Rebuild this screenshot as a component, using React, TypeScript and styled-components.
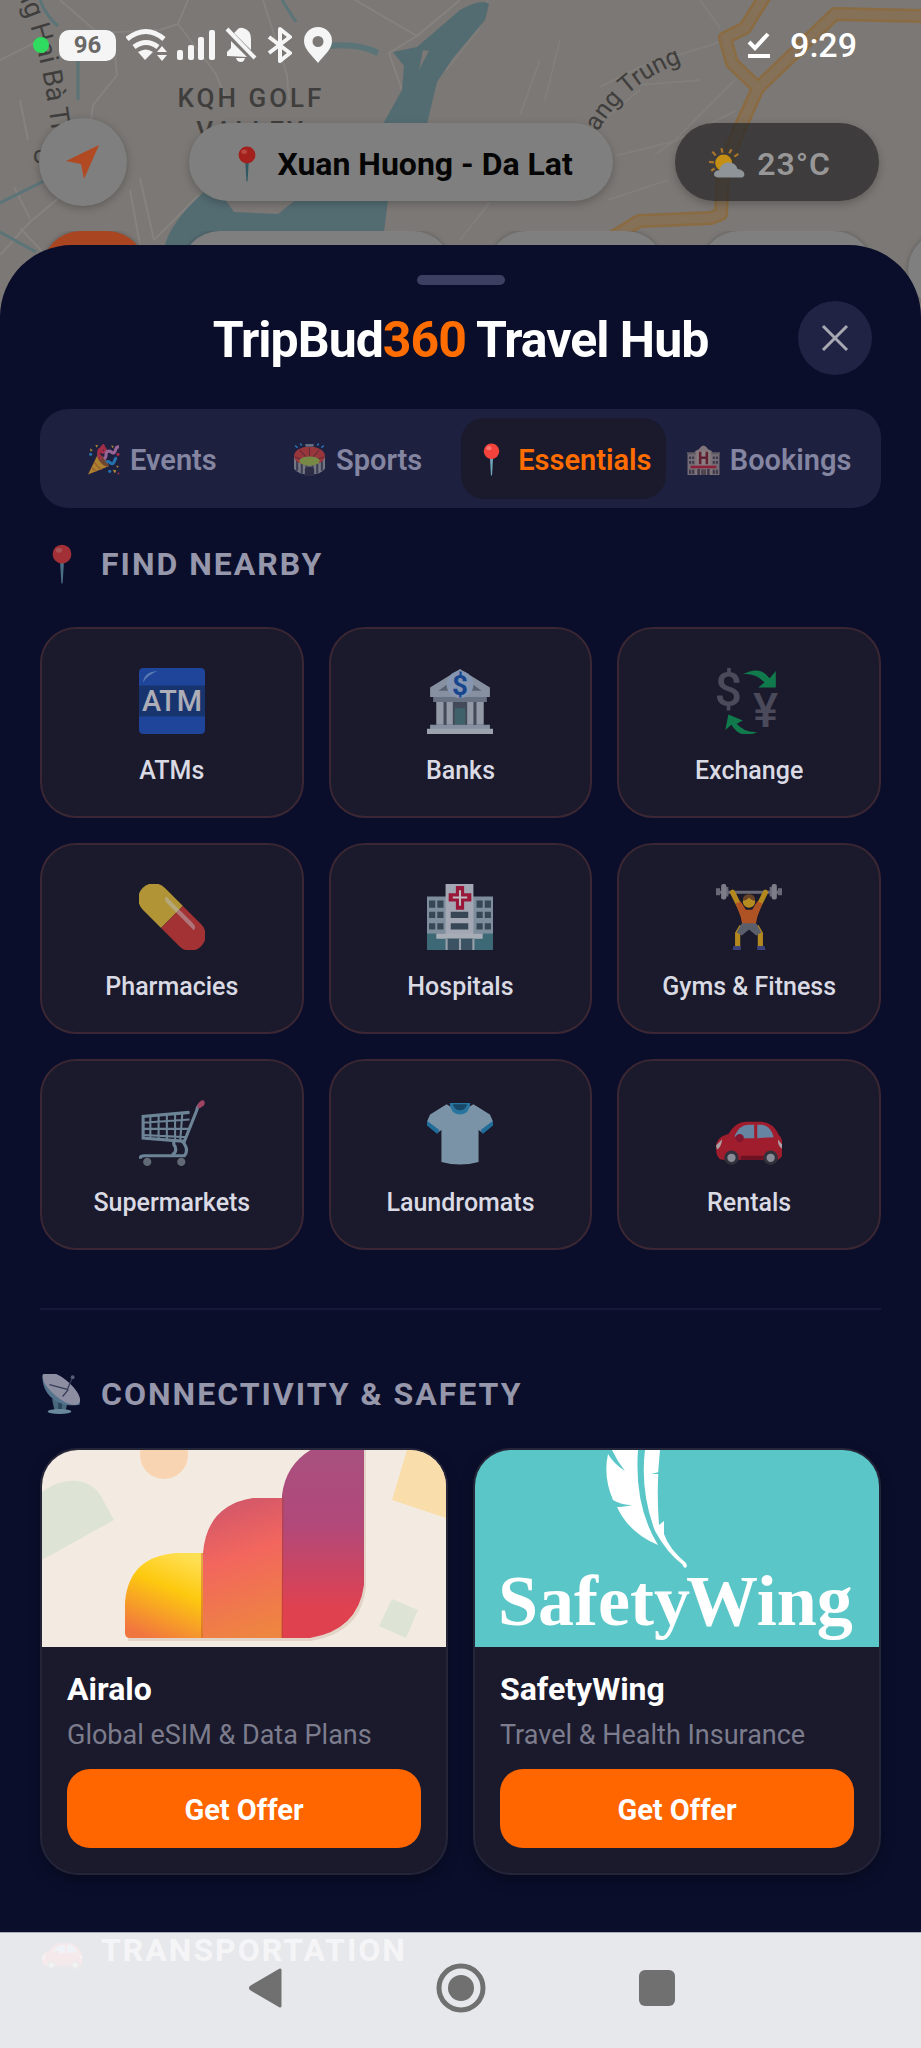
import React, { FC, ReactNode, useState } from 'react';
import styled, { createGlobalStyle } from 'styled-components';

const GlobalStyle = createGlobalStyle`
    * {
        box-sizing: border-box;
    }

    body {
        margin: 0;
        background: #0b0e2b;
        font-family: Roboto, 'Liberation Sans', sans-serif;
    }

    button {
        font-family: inherit;
        padding: 0;
        border: none;
        cursor: pointer;
    }
`;

const Screen = styled.div`
    position: relative;
    display: flex;
    flex-direction: column;
    height: 100vh;
    overflow: hidden;
    background: #7b7875;
`;

const MapLayer = styled.svg`
    position: absolute;
    top: 0;
    left: 0;
    width: 100%;
    height: 330px;
`;

const StatusBar = styled.div`
    position: relative;
    display: flex;
    flex-direction: row;
    justify-content: space-between;
    align-items: center;
    height: 90px;
    padding: 0 64px 0 33px;
`;

const StatusGroup = styled.div`
    display: flex;
    flex-direction: row;
    align-items: center;
    gap: 10px;

    & > svg {
        display: block;
    }
`;

const LiveDot = styled.span`
    width: 16px;
    height: 16px;
    border-radius: 50%;
    background: #2fdc5f;
`;

const Battery = styled.span`
    width: 57px;
    height: 31px;
    border-radius: 10px;
    background: #f5f5f5;
    color: #6b6967;
    font-size: 24px;
    font-weight: 700;
    line-height: 31px;
    text-align: center;
`;

const Clock = styled.span`
    margin-left: 9px;
    font-size: 34px;
    font-weight: 500;
    line-height: 40px;
    color: #ffffff;
`;

const TopRow = styled.div`
    position: relative;
    display: flex;
    flex-direction: row;
    justify-content: space-between;
    align-items: center;
    margin-top: 28px;
    padding: 0 42px 0 39px;
`;

const LocateButton = styled.button`
    display: flex;
    justify-content: center;
    align-items: center;
    width: 88px;
    height: 88px;
    border-radius: 50%;
    background: #7f7f7f;
    box-shadow: 0 2px 8px rgba(0, 0, 0, 0.25);
`;

const Pill = styled.button<{ $dark?: boolean }>`
    display: flex;
    flex-direction: row;
    align-items: center;
    gap: 12px;
    height: 78px;
    padding: 3px ${(props) => (props.$dark ? 48 : 40)}px 0 ${(props) => (props.$dark ? 34 : 40)}px;
    border-radius: 39px;
    background: ${(props) => (props.$dark ? 'rgba(45, 44, 43, 0.78)' : '#7f7f7f')};
    box-shadow: 0 3px 8px rgba(0, 0, 0, 0.22);
    font-size: 32px;
    font-weight: ${(props) => (props.$dark ? 600 : 700)};
    letter-spacing: ${(props) => (props.$dark ? '1px' : 'normal')};
    color: ${(props) => (props.$dark ? '#979797' : '#050505')};
`;

const ChipRow = styled.div`
    position: relative;
    display: flex;
    flex-direction: row;
    gap: 35px;
    margin: 25px 0 -64px 42px;
    overflow: hidden;
`;

const Chip = styled.span<{ $width: number; $active?: boolean }>`
    flex: none;
    width: ${(props) => props.$width}px;
    height: 78px;
    border-radius: 39px;
    background: ${(props) => (props.$active ? '#a94520' : '#7f7f7f')};
    box-shadow: 0 0 5px rgba(0, 0, 0, 0.25);
`;

const Sheet = styled.main`
    position: relative;
    display: flex;
    flex-direction: column;
    flex: 1;
    min-height: 0;
    padding: 30px 40px 0;
    overflow: hidden;
    border-radius: 72px 72px 0 0;
    background: #0a0e2b;
`;

const Handle = styled.span`
    flex: none;
    align-self: center;
    width: 88px;
    height: 10px;
    border-radius: 5px;
    background: #3c3f62;
`;

const SheetHeader = styled.header`
    display: grid;
    grid-template-columns: 1fr auto 1fr;
    align-items: start;
    margin-top: 16px;
    padding: 0 9px;
`;

const Title = styled.h1`
    grid-column: 2;
    margin: 0;
    font-size: 50px;
    font-weight: 700;
    line-height: 78px;
    letter-spacing: -1px;
    color: #ffffff;
`;

const Accent = styled.span`
    color: #ff6d00;
`;

const CloseButton = styled.button`
    display: flex;
    justify-content: center;
    align-items: center;
    justify-self: end;
    width: 74px;
    height: 74px;
    border-radius: 50%;
    background: #202343;
`;

const TabBar = styled.div`
    display: flex;
    flex-direction: row;
    margin-top: 30px;
    padding: 9px;
    border-radius: 28px;
    background: #1e2040;
`;

const Tab = styled.button<{ $active: boolean }>`
    display: flex;
    flex: 1;
    flex-direction: row;
    justify-content: center;
    align-items: center;
    gap: 10px;
    height: 81px;
    padding-top: 2px;
    border-radius: 23px;
    background: ${(props) => (props.$active ? '#1a1a2c' : 'transparent')};
    font-size: 29px;
    font-weight: 600;
    color: ${(props) => (props.$active ? '#ff6d00' : '#8485a0')};
    white-space: nowrap;

    & > svg {
        opacity: ${(props) => (props.$active ? 1 : 0.65)};
    }
`;

const SectionTitle = styled.h2<{ $top: number; $bottom: number }>`
    display: flex;
    flex-direction: row;
    align-items: center;
    gap: 19px;
    margin: ${(props) => props.$top}px 0 ${(props) => props.$bottom}px;
    padding-left: 2px;
    font-size: 32px;
    font-weight: 700;
    line-height: 40px;
    letter-spacing: 2px;
    color: #9697ab;

    & > svg {
        opacity: 0.65;
    }
`;

const PlaceGrid = styled.div`
    display: grid;
    grid-template-columns: repeat(3, 1fr);
    gap: 25px;
`;

const PlaceButton = styled.button`
    display: flex;
    flex-direction: column;
    align-items: center;
    gap: 21px;
    padding: 39px 0 29px;
    border: 2px solid #3a2733;
    border-radius: 36px;
    background: #1a1a2c;
    font-size: 25px;
    font-weight: 500;
    line-height: 32px;
    color: #dadae4;

    & > svg {
        opacity: 0.7;
    }
`;

const Divider = styled.hr`
    width: 100%;
    height: 2px;
    margin: 58px 0 0;
    border: none;
    background: #16193a;
`;

const OfferGrid = styled.div`
    display: grid;
    grid-template-columns: repeat(2, 1fr);
    gap: 25px;
`;

const OfferCard = styled.article`
    overflow: hidden;
    border: 2px solid #25253a;
    border-radius: 38px;
    background: #1a1a2c;
    box-shadow: 0 6px 14px rgba(0, 0, 0, 0.28);
`;

const Cover = styled.svg`
    display: block;
    width: 100%;
    height: 197px;
`;

const OfferBody = styled.div`
    display: flex;
    flex-direction: column;
    padding: 22px 25px 25px;
`;

const OfferName = styled.h3`
    margin: 0;
    font-size: 32px;
    font-weight: 700;
    line-height: 40px;
    color: #ffffff;
`;

const OfferText = styled.p`
    margin: 9px 0 17px;
    font-size: 27px;
    line-height: 34px;
    color: #7c7c8c;
`;

const OfferButton = styled.button`
    height: 79px;
    padding-top: 2px;
    border-radius: 23px;
    background: #ff6600;
    font-size: 29px;
    font-weight: 700;
    color: #ffffff;
`;

// translucent, the sheet shows through a little
const NavBar = styled.nav`
    position: absolute;
    right: 0;
    bottom: 0;
    left: 0;
    display: flex;
    flex-direction: row;
    justify-content: center;
    gap: 146px;
    height: 116px;
    padding-top: 30px;
    border-top: 1px solid #a9abb8;
    background: rgba(255, 255, 255, 0.905);
`;

const NavButton = styled.button`
    display: flex;
    justify-content: center;
    align-items: center;
    width: 50px;
    height: 50px;
    background: none;
`;

interface IIcon {
    size: number;
    children: ReactNode;
}

const Emoji: FC<IIcon> = ({ size, children }) => (
    <svg width={size} height={size} viewBox="0 0 64 64" aria-hidden="true">
        {children}
    </svg>
);

const pin = (
    <>
        <path d="M29 30h6l-2 33h-2z" fill="#6fa3b8" />
        <circle cx="32" cy="16" r="15" fill="#f4433c" />
        <ellipse cx="27" cy="10" rx="5" ry="4" fill="#ff8a80" opacity="0.7" />
    </>
);

// same pin under the dimmed backdrop
const pinDim = (
    <>
        <path d="M29 30h6l-2 33h-2z" fill="#2f5a63" />
        <circle cx="32" cy="16" r="15" fill="#a3201c" />
        <ellipse cx="27" cy="10" rx="5" ry="4" fill="#b8453f" />
    </>
);

const party = (
    <>
        <path d="M2 61 21 22q17 7 21 23z" fill="#f9b52c" />
        <path d="M14 37q8 12 15 14M9 47q5 7 9 8" fill="none" stroke="#e08a1e" strokeWidth="3" />
        <ellipse cx="31" cy="34" rx="6" ry="15" transform="rotate(-43 31 34)" fill="#9c5a2b" />
        <path d="M28 31c-6-5-9-18 1-21 7-2 10 8 3 8-5 0-7-9 2-14" fill="none" stroke="#e8344c" strokeWidth="6" />
        <path d="M33 31c8-5 0-13 8-15s7 7 12 2 0-10 9-11" fill="none" stroke="#d98ac4" strokeWidth="6" />
        <path d="M37 37c8-5 9 7 14 2s1-9 7-10" fill="none" stroke="#28a0ea" strokeWidth="6" />
        <path d="M6 10l5 4-4 3zM16 4l5 0-2 5zM47 5l5 1-3 4zM50 52l7 1-3 6zM57 43l5 3-4 2z" fill="#f9c22c" />
        <circle cx="7" cy="22" r="3" fill="#28a0ea" />
        <circle cx="60" cy="22" r="3" fill="#e8344c" />
        <circle cx="44" cy="55" r="3" fill="#28a0ea" />
        <circle cx="61" cy="59" r="2" fill="#e8344c" />
    </>
);

const stadium = (
    <>
        <path d="M2 26v24q8 11 30 12 22-1 30-12V26z" fill="#a3a7a8" />
        <path d="M8 34v20M17 40v19M26 43v19M38 43v19M47 40v19M56 34v20" stroke="#4c4d5e" strokeWidth="4" />
        <path d="M23 64V50q9-9 18 0v14z" fill="#35364a" />
        <ellipse cx="32" cy="25" rx="30" ry="18" fill="#d8443b" />
        <path d="M32 8v18M13 14l13 14M51 14 38 28M3 27l20 6M61 27l-20 6" stroke="#8e2e33" strokeWidth="2" />
        <ellipse cx="32" cy="35" rx="20" ry="9" fill="#a8c24a" />
        <path d="M24 2h16v5H24z" fill="#8f9aa5" />
        <path d="M4 5l5 4M14 1l3 4M60 5l-5 4M50 1l-3 4" stroke="#2f9be0" strokeWidth="3" />
    </>
);

const hotel = (
    <>
        <path d="M13 20q3-6 10-8 9-14 18 0 7 2 10 8v42H13z" fill="#b5a198" />
        <path d="M1 20h15v42H1zM48 20h15v42H48z" fill="#a39590" />
        <path d="M0 18h17v4H0zM47 18h17v4H47z" fill="#84797a" />
        <path d="M4 26h4v5H4zM10 26h4v5h-4zM4 35h4v5H4zM10 35h4v5h-4zM50 26h4v5h-4zM56 26h4v5h-4zM50 35h4v5h-4zM56 35h4v5h-4zM4 52h4v8H4zM10 52h4v8h-4zM50 52h4v8h-4zM56 52h4v8h-4zM20 50h5v12h-5zM39 50h5v12h-5z" fill="#4d4651" />
        <path d="M20 16h24v26H20z" fill="#c4b3a6" />
        <path d="M23 17h5v9h8v-9h5v24h-5V31h-8v10h-5z" fill="#86202c" />
        <path d="M7 44h50v5H7z" fill="#c81f36" />
        <path d="M27 51h10v11H27z" fill="#6b5b5c" />
    </>
);

const atm = (
    <>
        <rect width="64" height="64" rx="4" fill="#2158c8" />
        <path d="M0 17h64v30H0z" fill="#173f8c" />
        <path d="M4 14q1-10 14-11Q8 7 4 14z" fill="#7ba4ea" />
        <text x="32" y="42" textAnchor="middle" fontFamily="Roboto" fontSize="28" fontWeight="500" fill="#ececf2">
            ATM
        </text>
    </>
);

const bank = (
    <>
        <path d="M32 1 61 19v9H3v-9z" fill="#b5c3d2" />
        <path d="M32 7 53 22H11z" fill="#74818f" />
        <path d="M6 28h52v5H6z" fill="#8b98a7" />
        <path d="M10 33h44v22H10z" fill="#55606e" />
        <path d="M9 33h7v22H9zM19 33h6v22h-6zM39 33h6v22h-6zM48 33h7v22h-7z" fill="#c7d0dc" />
        <path d="M27 39h10v16H27z" fill="#4f7f85" />
        <path d="M3 55h58v5H3z" fill="#b5c3d2" />
        <path d="M0 59h64v5H0z" fill="#d2dae4" />
        <circle cx="32" cy="16" r="13" fill="#b4cbea" />
        <text x="32" y="26" textAnchor="middle" fontFamily="Roboto" fontSize="27" fontWeight="700" fill="#1758b8">
            $
        </text>
    </>
);

const exchange = (
    <>
        <text x="12" y="37" textAnchor="middle" fontFamily="Roboto" fontSize="47" fontWeight="500" fill="#605f70">
            $
        </text>
        <text x="48" y="57" textAnchor="middle" fontFamily="Roboto" fontSize="46" fontWeight="500" fill="#605f70">
            ¥
        </text>
        <path d="M26 6Q43-3 52 10l6-7v16H41l6-5Q39 5 26 6z" fill="#0ea35a" />
        <path d="M40 62Q24 70 15 55l-6 5 3-15 14 6-6 3q8 9 20 8z" fill="#0ea35a" />
    </>
);

const pill = (
    <g transform="rotate(45 32 32)">
        <path d="M32 17H7a15 15 0 0 0 0 30h25z" fill="#f0c83a" />
        <path d="M32 17h25a15 15 0 0 1 0 30H32z" fill="#de3d38" />
        <path d="M14 22h36q6 0 6 4H20q-6 0-6-4z" fill="#ffffff" opacity="0.5" />
    </g>
);

const hospital = (
    <>
        <path d="M0 12h64v52H0z" fill="#a9c0cc" />
        <path d="M0 48h64v16H0z" fill="#4c8a94" />
        <path d="M18 0h27v50H18z" fill="#dde3ee" />
        <path d="M2 16h6v7H2zM10 16h6v7h-6zM2 27h6v6H2zM10 27h6v6h-6zM2 38h6v6H2zM10 38h6v6h-6zM48 16h6v7h-6zM56 16h6v7h-6zM48 27h6v6h-6zM56 27h6v6h-6zM48 38h6v6h-6zM56 38h6v6h-6zM23 27h17v6H23zM23 38h17v6H23z" fill="#455b67" />
        <path d="M9 48h45v5H9z" fill="#e4eaf2" />
        <path d="M19 53h26v11H19z" fill="#4a6b7b" />
        <path d="M19 53v11M32 53v11M45 53v11" stroke="#cfd9e2" strokeWidth="2" />
        <path d="M28 2h8v7h7v8h-7v8h-8v-8h-7V9h7z" fill="#d01840" />
        <path d="M32 6v15M25 13h14" stroke="#ffffff" strokeWidth="2" />
    </>
);

const gym = (
    <>
        <path d="M2 8h60" stroke="#8b8b96" strokeWidth="3" />
        <path d="M0 4h4v7H0zM60 4h4v7h-4zM9 3h3v9H9zM52 3h3v9h-3z" fill="#8a8a96" />
        <rect x="5" y="0" width="5" height="15" rx="2" fill="#a7a7b2" />
        <rect x="54" y="0" width="5" height="15" rx="2" fill="#a7a7b2" />
        <path d="M16 8l9 18M48 8l-9 18" stroke="#f5b91a" strokeWidth="5" strokeLinecap="round" />
        <path d="M19 19l5-2 5 8h6l5-8 5 2-5 13-2 10H26l-2-10z" fill="#ee6a22" />
        <circle cx="32" cy="17" r="6" fill="#f8bd1c" />
        <path d="M26 16q0-6 6-6t6 6q-4 0-6-3-2 3-6 3z" fill="#8a5526" />
        <path d="M25 41l-4 7v13M39 41l4 7v13" fill="none" stroke="#f5b91a" strokeWidth="5" />
        <path d="M25 38h14l5 9-5 3-7-6-7 6-5-3z" fill="#777c86" />
        <path d="M17 60h7v4h-8zM40 60h7l1 4h-8z" fill="#4a559c" />
    </>
);

const cart = (
    <>
        <path d="M62 3q-5 1-6 7L44 40 4 37V16l45-4" fill="none" stroke="#8fb1c4" strokeWidth="3" />
        <path d="M3 22l46-3M3 28l45 0M3 34l43 2M11 15v23M19 15v23M27 14v24M35 13v26M42 13l-2 26" stroke="#8fb1c4" strokeWidth="2" />
        <path d="M34 40q-1 3 1 5 2 6-3 8M42 40q7 8 2 14H5q-4 0-4 3" fill="none" stroke="#8fb1c4" strokeWidth="3" />
        <circle cx="8" cy="60" r="4" fill="#7e8b94" />
        <circle cx="41" cy="60" r="4" fill="#7e8b94" />
        <path d="M56 7q2-6 6-7 3 2 1 5l-4 3z" fill="#d9567c" />
    </>
);

const shirt = (
    <>
        <path d="M19 4 3 14-1 23l11 9 4-3v31q18 5 36 0V29l4 3 11-9-4-9L45 4q-13 9-26 0z" fill="#a3c7da" />
        <path d="M0 20l-1 4 11 9 2-4zM64 20l1 4-11 9-2-4z" fill="#2491c9" />
        <path d="M22 3h20q-1 11-10 11T22 3z" fill="#2f9dd2" />
        <path d="M25 4h14q-2 6-7 6t-7-6z" fill="#185c80" />
    </>
);

const car = (
    <>
        <path d="M0 46q0-10 12-13 7-12 17-12h14q12 0 18 13 4 3 4 14 0 9-6 10H6q-6-1-6-12z" fill="#d81f2d" />
        <path d="M18 35q5-11 13-11h6v13H21zM40 24h5q8 1 11 12l-16 1z" fill="#87b3d6" />
        <path d="M0 44q4-4 6-6-1 8-5 10zM65 44q-4-4-5-6 0 7 4 9z" fill="#e9d9d9" />
        <circle cx="23" cy="37" r="4" fill="#b11632" />
        <path d="M24 56h26" stroke="#8f1020" strokeWidth="4" />
        <circle cx="15" cy="56" r="7" fill="#3b3b44" />
        <circle cx="53" cy="56" r="7" fill="#3b3b44" />
        <circle cx="15" cy="56" r="4" fill="#b9bcc4" />
        <circle cx="53" cy="56" r="4" fill="#b9bcc4" />
    </>
);

const satellite = (
    <>
        <path d="M16 40h26l-4 18H20z" fill="#6b99a8" />
        <path d="M26 42h6v16h-6z" fill="#3e6577" />
        <ellipse cx="28" cy="60" rx="19" ry="4" fill="#9ccbd8" />
        <path d="M1 1C-2 30 24 56 60 49 64 36 24-4 1 1z" fill="#7ca9c0" />
        <ellipse cx="31" cy="23" rx="37" ry="15" transform="rotate(40 31 23)" fill="#d3d3e2" />
        <path d="M12 17l30 8M33 36l9-11M40 26 49 5" fill="none" stroke="#4d5670" strokeWidth="2" />
        <circle cx="49" cy="5" r="3" fill="#7f8aa5" />
    </>
);

const weather = (
    <>
        <path d="M22 4l2 8M6 10l6 7M0 28l9 1M40 6l-4 7M52 14l-7 5M4 44l6-4" stroke="#a9752a" strokeWidth="4" />
        <circle cx="26" cy="30" r="15" fill="#c48f14" />
        <path d="M16 56q-8-1-7-7 2-6 9-6 4-13 16-14 13 0 17 12 12 2 12 10-1 5-6 5z" fill="#8f9499" />
    </>
);

const tabs = [
    { id: 'events', label: 'Events', icon: party },
    { id: 'sports', label: 'Sports', icon: stadium },
    { id: 'essentials', label: 'Essentials', icon: pin },
    { id: 'bookings', label: 'Bookings', icon: hotel },
];

const places = [
    { label: 'ATMs', icon: atm },
    { label: 'Banks', icon: bank },
    { label: 'Exchange', icon: exchange },
    { label: 'Pharmacies', icon: pill },
    { label: 'Hospitals', icon: hospital },
    { label: 'Gyms & Fitness', icon: gym },
    { label: 'Supermarkets', icon: cart },
    { label: 'Laundromats', icon: shirt },
    { label: 'Rentals', icon: car },
];

const HIGHWAY = 'M765-4l-20 32-20 10 7 25 26 25 77-74 90 2M758 88l-19 42-16 42-2 42-10 4-72 3-36 22';

const MapBackground: FC = () => (
    <MapLayer viewBox="0 0 921 330" preserveAspectRatio="xMidYMin slice" aria-hidden="true">
        <g fill="none" stroke="#85827f" strokeWidth="2">
            <path d="M60 0l38 33 62-3 18-6 10-24M113 33l4 42-24 30-2 16M178 24l38 50 10 26M263 0l24 75 2 25M355 0l62 36 43-36M417 36l-28 17 14 40" />
            <path d="M0 255l30-33 60-50M14 187l16 32M20 228l34 36M140 178l14 62M130 190l10 55M154 240l45-45M0 60l40-20M20 100l8 40" />
            <path d="M488 0l-10 30-32 40M720 42l-80 25-40 20M700 0l20 28M735 80l-60 60-20 15M615 156l60-15 60-30M608 200l60-20M540 60l-20 55M560 40l-15 60M460 240l30-38M640 85l60-5M590 130l50-40" opacity="0.7" />
        </g>
        <g fill="none" stroke="#5b7478" strokeWidth="3">
            <path d="M40 0q6 16 18 26M78 60v40M0 203l44-22M0 232l36 20M282 0l14 22" />
            <path d="M330 46q28-3 48 7" strokeWidth="6" />
        </g>
        <path d="M460 10l-43 37-24 5 11 14-2 24-19 34h44l10-42 16-24 32-38 4-16Q482-2 460 10z" fill="#536c72" />
        <path d="M423 50l-4 20 10-19z" fill="#7b7875" />
        <path d="M204 192q-34 30-40 56h218l7-56z" fill="#536c72" />
        <path d="M224 198l10 14 44 2 20-16z" fill="#7b7875" />
        <g fill="none" strokeLinejoin="round">
            <path d={HIGHWAY} stroke="#8a6b42" strokeWidth="14" />
            <path d={HIGHWAY} stroke="#857158" strokeWidth="9" />
        </g>
        <path id="street-left" d="M16-8Q42 40 54 150" fill="none" />
        <path id="street-right" d="M598 132Q625 82 688 60" fill="none" />
        <g fontFamily="Roboto" fill="#3f3e3d">
            <text fontSize="27">
                <textPath href="#street-left">ng Hai Bà Trưng</textPath>
            </text>
            <text fontSize="25">
                <textPath href="#street-right">ang Trung</textPath>
            </text>
            <text x="33" y="163" fontSize="24">
                c
            </text>
            <text x="251" y="107" fontSize="26" fontWeight="500" letterSpacing="3" textAnchor="middle">
                KQH GOLF
            </text>
            <text x="251" y="140" fontSize="26" fontWeight="500" letterSpacing="3" textAnchor="middle">
                VALLEY
            </text>
        </g>
    </MapLayer>
);

const StatusIcons: FC = () => (
    <>
        <svg width="41" height="34" viewBox="0 0 41 34">
            <g fill="none" stroke="#f5f5f5" strokeWidth="5">
                <path d="M1 11q19-15 37 0" />
                <path d="M8 19q12-9 24 0" />
            </g>
            <path d="M12 24q8-5 15 0l-8 8z" fill="#f5f5f5" />
            <path d="M36 18l5 6h-10zM36 33l5-6h-10z" fill="#f5f5f5" />
        </svg>
        <svg width="38" height="30" viewBox="0 0 38 30" fill="#f5f5f5">
            <rect x="0" y="20" width="6" height="10" rx="2" />
            <rect x="11" y="15" width="6" height="15" rx="2" />
            <rect x="21" y="7" width="6" height="23" rx="2" />
            <rect x="32" y="0" width="6" height="30" rx="2" />
        </svg>
        <svg width="32" height="36" viewBox="0 0 32 36">
            <path d="M2 29v-4l4-4v-7L22 30zM12 3q2-3 6-2 8 2 8 11v11L9 6zM11 31h9q-1 4-4 4-4 0-5-4z" fill="#f5f5f5" />
            <path d="M2 2l28 29" stroke="#f5f5f5" strokeWidth="4" />
        </svg>
        <svg width="26" height="36" viewBox="0 0 26 36" fill="none" stroke="#f5f5f5" strokeWidth="4">
            <path d="M2 10l21 16-10 8V2l10 8L2 26" strokeLinejoin="round" />
        </svg>
        <svg width="30" height="36" viewBox="0 0 30 36">
            <path
                d="M15 0a14 14 0 0 1 14 14c0 9-9 15-14 22C10 29 1 23 1 14A14 14 0 0 1 15 0zm0 9a5 5 0 1 0 0 11 5 5 0 0 0 0-11z"
                fill="#f5f5f5"
                fillRule="evenodd"
            />
        </svg>
    </>
);

const AiraloCover: FC = () => (
    <Cover viewBox="0 0 404 197" preserveAspectRatio="xMidYMid slice" role="img" aria-label="Airalo">
        <defs>
            <linearGradient id="bar1" x1="0.7" y1="0" x2="0.3" y2="1">
                <stop offset="0" stopColor="#ffdf52" />
                <stop offset="0.4" stopColor="#fdc90f" />
                <stop offset="1" stopColor="#f1753f" />
            </linearGradient>
            <linearGradient id="bar2" x1="0.4" y1="0" x2="0.6" y2="1">
                <stop offset="0" stopColor="#d2586a" />
                <stop offset="0.4" stopColor="#f2665e" />
                <stop offset="1" stopColor="#ee8540" />
            </linearGradient>
            <linearGradient id="bar3" x1="0.5" y1="0" x2="0.5" y2="1">
                <stop offset="0" stopColor="#a8507f" />
                <stop offset="0.4" stopColor="#b1497a" />
                <stop offset="0.85" stopColor="#e0414f" />
            </linearGradient>
        </defs>
        <path d="M0 0h404v197H0z" fill="#f3ebe1" />
        <circle cx="122" cy="5" r="24" fill="#f9d4b2" />
        <path d="M0 42q20-15 41-10 15 5 20 18l11 20L0 110z" fill="#dde4d6" />
        <path d="M365 0l-15 50 54 18V0z" fill="#f9ddaa" />
        <path d="M350 149l26 11-12 28-27-12z" fill="#dde4d6" />
        <path d="M86 189h182q50-8 54-53V0" fill="none" stroke="#e2d5c8" strokeWidth="4" />
        <path d="M83 152q4-46 52-49h28v85H88q-5 0-5-5z" fill="url(#bar1)" />
        <path d="M161 188v-85q4-48 50-55h32v140z" fill="url(#bar2)" />
        <path d="M240 188V45q4-32 32-47h50v137q-6 45-54 53z" fill="url(#bar3)" />
        <path d="M160 103v85M241 48l-1 140" stroke="#b5402c" strokeWidth="1" opacity="0.7" />
    </Cover>
);

const SafetyWingCover: FC = () => (
    <Cover viewBox="0 0 404 197" preserveAspectRatio="xMidYMid slice" role="img" aria-label="SafetyWing">
        <path d="M0 0h404v197H0z" fill="#5bc6c7" />
        <path d="M137 0q5 11 13 21-12-8-17-17-5 23 5 46 8 5 19 5-9 2-15 2 12 26 41 38-24-39-20-95z" fill="#ffffff" />
        <path d="M170 0h15q-4 35-1 75l5-4v13q5 15 22 29 2 4-1 5-3-2-2-3-16-12-28-34-15-40-10-81z" fill="#ffffff" />
        <path d="M184 22l-8 2 8 0z" fill="#5bc6c7" />
        <g fontFamily="'Liberation Serif', serif" fontSize="72" fontWeight="700" fill="#ffffff">
            <text x="23" y="175">
                Safety
            </text>
            <text x="211" y="175">
                Wing
            </text>
        </g>
    </Cover>
);

interface IOffer {
    name: string;
    text: string;
    cover: ReactNode;
}

const Offer: FC<IOffer> = ({ name, text, cover }) => (
    <OfferCard>
        {cover}
        <OfferBody>
            <OfferName>{name}</OfferName>
            <OfferText>{text}</OfferText>
            <OfferButton type="button">Get Offer</OfferButton>
        </OfferBody>
    </OfferCard>
);

const App: FC = () => {
    const [active, setActive] = useState('essentials');

    return (
        <Screen>
            <GlobalStyle />
            <MapBackground />
            <StatusBar>
                <StatusGroup>
                    <LiveDot />
                    <Battery>96</Battery>
                    <StatusIcons />
                </StatusGroup>
                <StatusGroup>
                    <svg width="24" height="28" viewBox="0 0 24 28" fill="none" stroke="#ffffff" strokeWidth="4">
                        <path d="M2 11l6 6L21 3M1 25h22" />
                    </svg>
                    <Clock>9:29</Clock>
                </StatusGroup>
            </StatusBar>
            <TopRow>
                <LocateButton type="button" aria-label="My location">
                    <svg width="34" height="34" viewBox="0 0 34 34">
                        <path d="M33 0L18 34l-3-15L0 16z" fill="#b14a22" />
                    </svg>
                </LocateButton>
                <Pill type="button">
                    <Emoji size={36}>{pinDim}</Emoji>
                    Xuan Huong - Da Lat
                </Pill>
                <Pill type="button" $dark>
                    <Emoji size={36}>{weather}</Emoji>
                    23°C
                </Pill>
            </TopRow>
            <ChipRow>
                <Chip $width={104} $active />
                <Chip $width={271} />
                <Chip $width={178} />
                <Chip $width={173} />
                <Chip $width={173} />
            </ChipRow>
            <Sheet>
                <Handle />
                <SheetHeader>
                    <Title>
                        TripBud<Accent>360</Accent> Travel Hub
                    </Title>
                    <CloseButton type="button" aria-label="Close">
                        <svg width="28" height="28" viewBox="0 0 28 28" stroke="#a9a9b4" strokeWidth="3">
                            <path d="M2 2l24 24M26 2L2 26" />
                        </svg>
                    </CloseButton>
                </SheetHeader>
                <TabBar role="tablist">
                    {tabs.map((tab) => (
                        <Tab
                            key={tab.id}
                            type="button"
                            role="tab"
                            aria-selected={tab.id === active}
                            $active={tab.id === active}
                            onClick={() => setActive(tab.id)}
                        >
                            <Emoji size={33}>{tab.icon}</Emoji>
                            {tab.label}
                        </Tab>
                    ))}
                </TabBar>
                <SectionTitle $top={36} $bottom={43}>
                    <Emoji size={40}>{pin}</Emoji>
                    FIND NEARBY
                </SectionTitle>
                <PlaceGrid>
                    {places.map((place) => (
                        <PlaceButton key={place.label} type="button">
                            <Emoji size={66}>{place.icon}</Emoji>
                            {place.label}
                        </PlaceButton>
                    ))}
                </PlaceGrid>
                <Divider />
                <SectionTitle $top={64} $bottom={34}>
                    <Emoji size={40}>{satellite}</Emoji>
                    CONNECTIVITY & SAFETY
                </SectionTitle>
                <OfferGrid>
                    <Offer name="Airalo" text="Global eSIM & Data Plans" cover={<AiraloCover />} />
                    <Offer name="SafetyWing" text="Travel & Health Insurance" cover={<SafetyWingCover />} />
                </OfferGrid>
                <SectionTitle $top={55} $bottom={34}>
                    <Emoji size={40}>{car}</Emoji>
                    TRANSPORTATION
                </SectionTitle>
            </Sheet>
            <NavBar>
                <NavButton type="button" aria-label="Back">
                    <svg width="34" height="42" viewBox="0 0 34 42">
                        <path d="M32 3v36L3 22q-1-1 0-2z" fill="#707070" stroke="#707070" strokeWidth="3" strokeLinejoin="round" />
                    </svg>
                </NavButton>
                <NavButton type="button" aria-label="Home">
                    <svg width="50" height="50" viewBox="0 0 50 50">
                        <circle cx="25" cy="25" r="22" fill="none" stroke="#707070" strokeWidth="5" />
                        <circle cx="25" cy="25" r="13" fill="#707070" />
                    </svg>
                </NavButton>
                <NavButton type="button" aria-label="Recent apps">
                    <svg width="36" height="36" viewBox="0 0 36 36">
                        <rect width="36" height="36" rx="6" fill="#707070" />
                    </svg>
                </NavButton>
            </NavBar>
        </Screen>
    );
};

export default App;
